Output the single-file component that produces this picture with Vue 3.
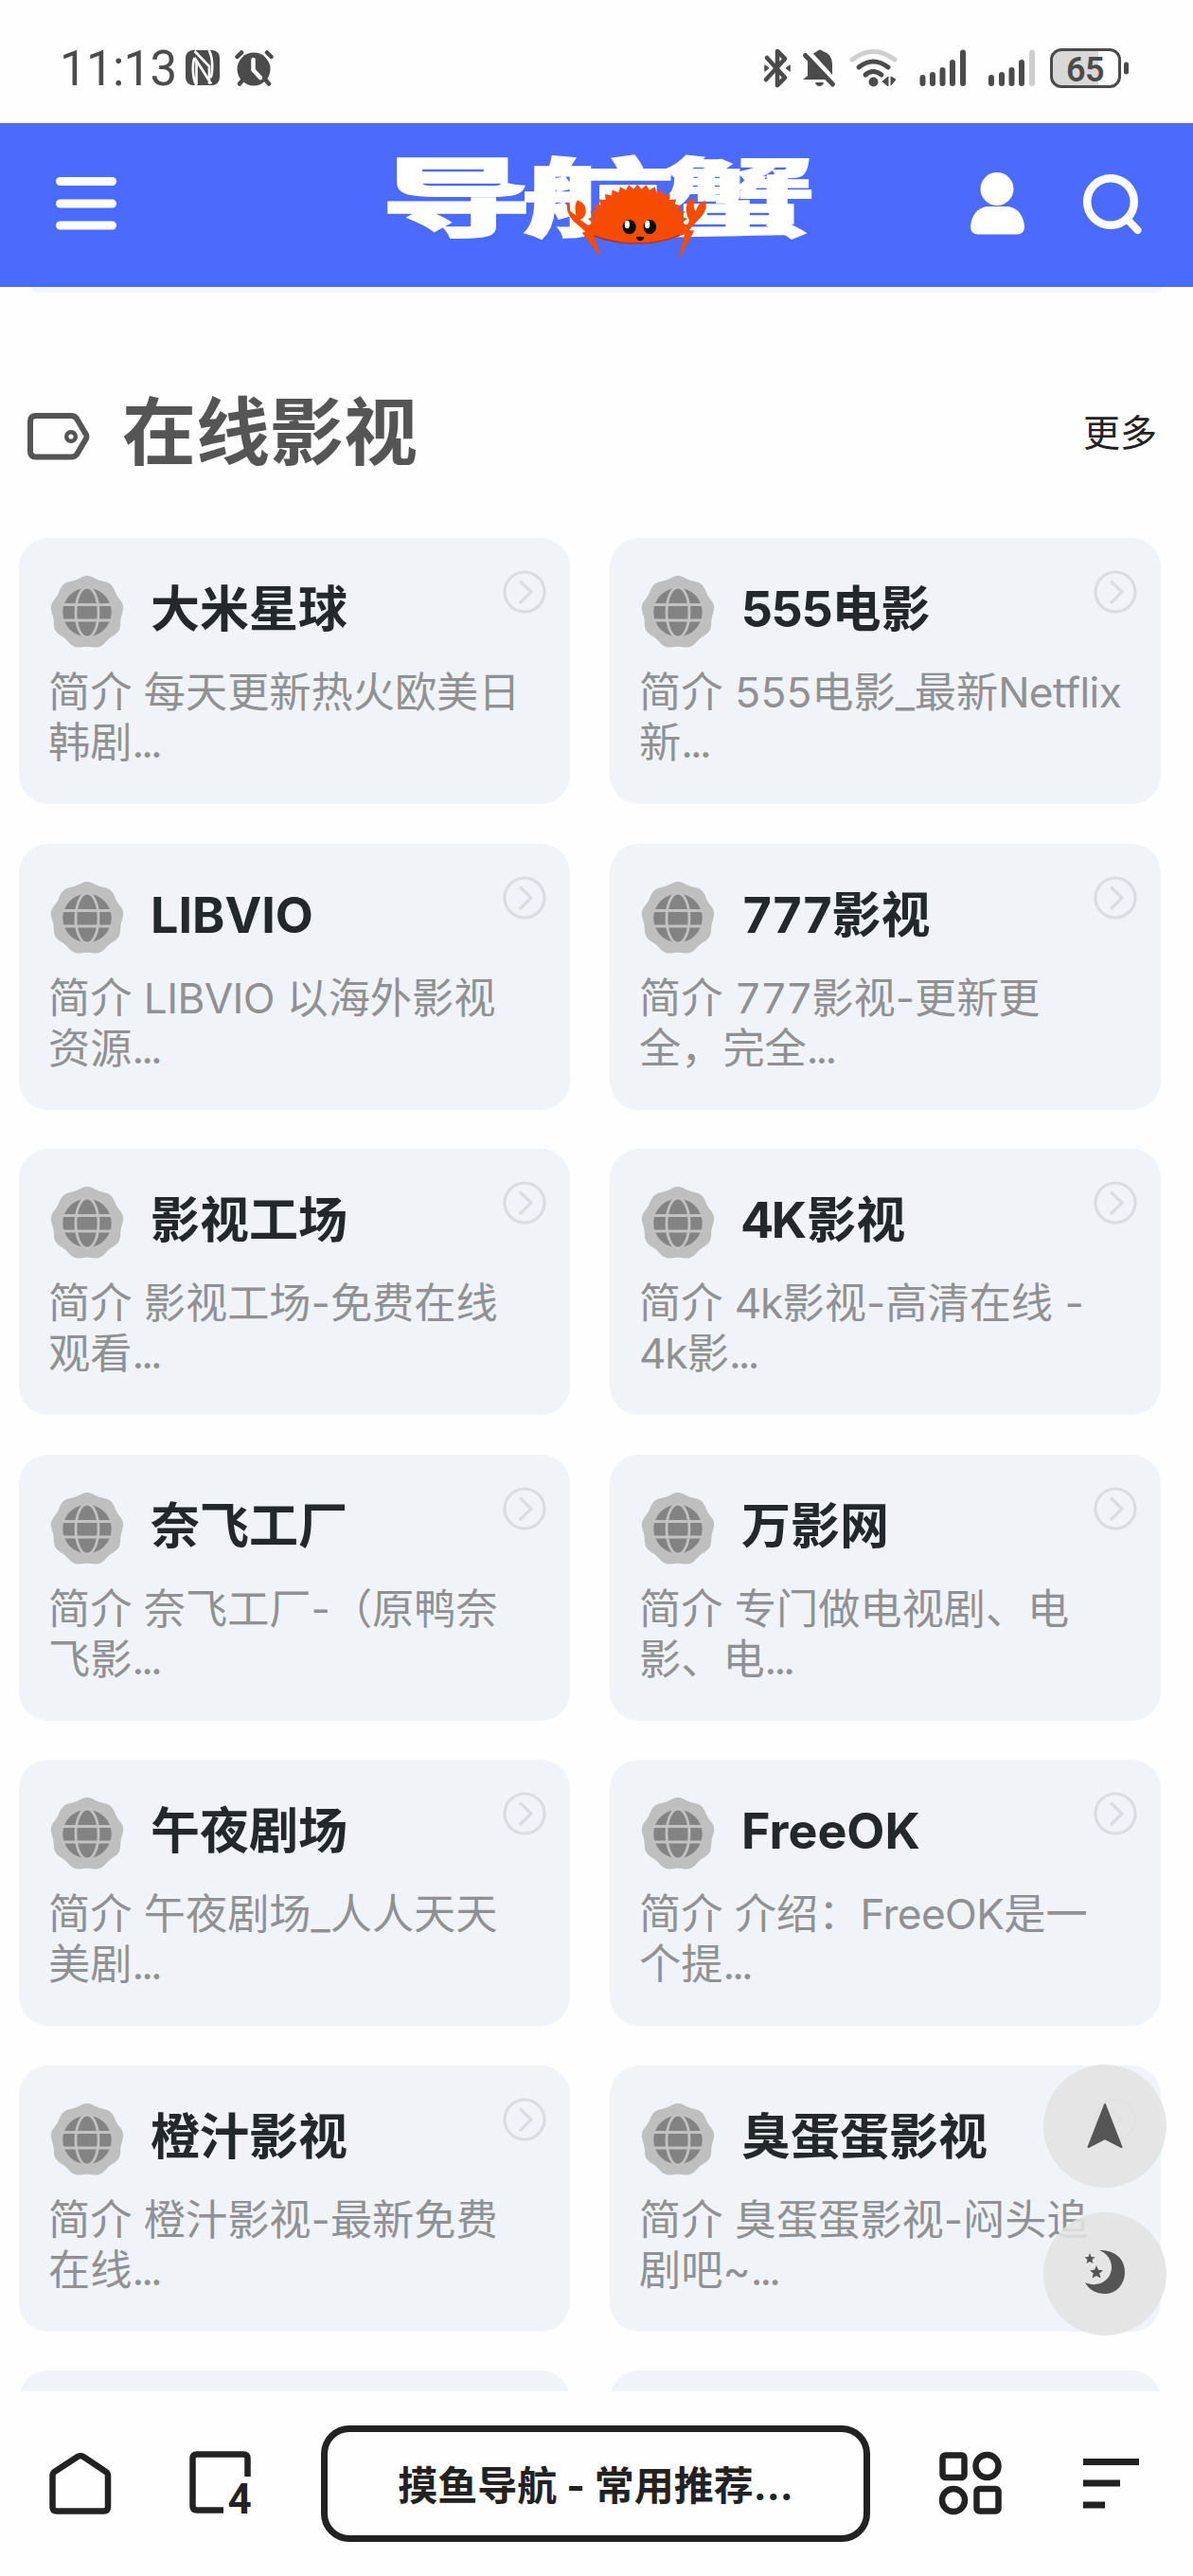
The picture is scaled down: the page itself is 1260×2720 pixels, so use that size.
<script setup>
const rows = [
  ['大米星球', '简介 每天更新热火欧美日', '韩剧...'],
  ['555电影', '简介 555电影_最新Netflix', '新...'],
  ['LIBVIO', '简介 LIBVIO 以海外影视', '资源...'],
  ['777影视', '简介 777影视-更新更', '全，完全...'],
  ['影视工场', '简介 影视工场-免费在线', '观看...'],
  ['4K影视', '简介 4k影视-高清在线 -', '4k影...'],
  ['奈飞工厂', '简介 奈飞工厂-（原鸭奈', '飞影...'],
  ['万影网', '简介 专门做电视剧、电', '影、电...'],
  ['午夜剧场', '简介 午夜剧场_人人天天', '美剧...'],
  ['FreeOK', '简介 介绍：FreeOK是一', '个提...'],
  ['橙汁影视', '简介 橙汁影视-最新免费', '在线...'],
  ['臭蛋蛋影视', '简介 臭蛋蛋影视-闷头追', '剧吧~...'],
]

// Letters, digits and dots each get their own tracking beside the Chinese text
const kind = (t) => (/^[A-Za-z]/.test(t) ? 'alpha' : /^\d/.test(t) ? 'digit' : /^\./.test(t) ? 'dots' : '')
const runs = (text) =>
  text.split(/([A-Za-z]+|\d+|\.+)/).filter(Boolean).map((t) => ({ t, kind: kind(t) }))

const sites = rows.map(([name, ...desc]) => ({ name, title: runs(name), desc: desc.map(runs) }))

// Nine-lobed badge behind the globe, one lobe pointing up
const badge = (() => {
  const pts = []
  for (let i = 0; i < 180; i++) {
    const t = (i / 180) * Math.PI * 2
    const r = 37.4 + 1.2 * Math.cos(9 * t)
    pts.push(`${(39 + r * Math.sin(t)).toFixed(2)},${(38.6 - r * Math.cos(t)).toFixed(2)}`)
  }
  return 'M' + pts.join('L') + 'Z'
})()

// Crab shell: spiky upper half, smooth belly
const shell = (() => {
  const pts = []
  const n = 19
  for (let i = 0; i <= n * 2; i++) {
    const a = Math.PI * (1.03 - (i / (n * 2)) * 1.06)
    const k = i % 2 ? 1 : 0.89
    pts.push(`${(850 + 160 * k * Math.cos(a)).toFixed(1)},${(295 - 131 * k * Math.sin(a)).toFixed(1)}`)
  }
  return 'M' + pts.join('L') + 'L1002,318Q940,352 852,352Q764,352 692,318Z'
})()
</script>

<template>
  <div class="screen">
    <div class="status">
      <div class="status-left">
        <span class="time">11:13</span>
        <svg class="nfc" width="36" height="37" viewBox="0 0 36 37">
          <rect width="36" height="37" rx="8" fill="#4b4b4b" />
          <path d="M11.500 37C7 30 7 14 9.500 8M24.500 0C29 7 29 23 26.500 29" fill="none" stroke="#fff" stroke-width="2.600" />
          <path d="M9.500 1L25 17V35.500M11.500 36V11L27 35.500" fill="none" stroke="#fff" stroke-width="2.600" />
        </svg>
        <svg class="alarm" width="42" height="40" viewBox="0 0 42 40">
          <circle cx="20" cy="21" r="17.500" fill="#4b4b4b" />
          <path d="M2.500 8L7 3.500M38.500 8L34 3.500M8 33L5 36.500M33 33L36 36.500" stroke="#4b4b4b" stroke-width="4.500" stroke-linecap="round" />
          <path d="M19.500 11V22L27 30" fill="none" stroke="#fff" stroke-width="4.500" stroke-linecap="round" stroke-linejoin="round" />
        </svg>
      </div>
      <svg class="status-right" width="390" height="44" viewBox="805 50 390 44">
        <g fill="none" stroke="#4b4b4b" stroke-linecap="round" stroke-linejoin="round">
          <path d="M810 61L829 82L821 90V54L829 62L809 84" stroke-width="4.600" />
          <path d="M808 69L812 72L808 75ZM834 69L830 72L834 75Z" fill="#4b4b4b" stroke-width="1" />
        </g>
        <path d="M848 84L853 80V67Q853 60 858 57Q862 55 863 54Q866 51 869 54Q879 57 879 68V79L882 84Z" fill="#4b4b4b" />
        <path d="M861 87H870Q869 91 865.500 91Q862 91 861 87Z" fill="#4b4b4b" />
        <path d="M854 55L884 88" stroke="#fff" stroke-width="5" />
        <path d="M850.500 58.500L879.500 89" stroke="#4b4b4b" stroke-width="5" stroke-linecap="round" />
        <g fill="none" stroke-width="5" stroke-linecap="round">
          <path d="M900 63Q922 46 945 63" stroke="#cfcfcf" />
          <path d="M907 71Q922 59 938 71M914 79Q922 72 931 79" stroke="#4b4b4b" />
        </g>
        <circle cx="922.500" cy="86.500" r="5" fill="#4b4b4b" />
        <path d="M932 86L938 81V91ZM946 84L941 90V81Z" fill="#4b4b4b" stroke="#4b4b4b" />
        <g stroke="#4b4b4b" stroke-width="6" stroke-linecap="round">
          <path d="M974.500 82V88M985 79V88M995.500 74V88M1006 66V88M1017 55.500V88" />
          <path d="M1047 82V88M1058 79V88M1068.500 74V88M1079 66V88" />
          <path d="M1090 55.500V88" stroke="#cfcfcf" />
        </g>
        <path d="M1120 54H1160V91H1120Q1111 91 1111 82V63Q1111 54 1120 54Z" fill="#d8d8d8" />
        <rect x="1110.500" y="52.500" width="72" height="39" rx="10.500" fill="none" stroke="#4b4b4b" stroke-width="3" />
        <rect x="1187" y="65.500" width="5" height="13" rx="2.500" fill="#4b4b4b" />
        <text class="battery-text" x="1146" y="86" text-anchor="middle">65</text>
      </svg>
    </div>

    <header class="header">
      <svg class="burger" width="64" height="56" viewBox="0 0 64 56" fill="#fff">
        <rect width="64" height="9" rx="4.500" /><rect y="23.500" width="64" height="9" rx="4.500" /><rect y="46.500" width="64" height="9" rx="4.500" />
      </svg>
      <svg class="logo" width="480" height="150" viewBox="0 0 1440 450">
        <text class="logo-text" transform="translate(36 307) scale(1.800 1)" x="0 249 496" y="0">导航蟹</text>
        <g fill="#f74c00">
          <path d="M700 330Q672 300 648 282Q618 250 629 220Q638 226 636 248L655 262Q648 228 660 214Q690 226 686 254Q682 270 668 276L712 306Z" />
          <path d="M990 318Q1008 296 1014 278Q998 250 1008 222Q1020 206 1034 210Q1022 234 1034 250Q1042 222 1064 216Q1074 236 1056 262Q1040 280 1030 290L1004 318Z" />
          <path d="M678 318L731 388L710 330ZM1026 312L984 392L1002 322Z" stroke="#f74c00" stroke-width="5" stroke-linejoin="round" />
          <path :d="shell" />
          <path d="M676 318L712 300V330ZM1028 314L985 295V326Z" />
        </g>
        <path d="M712 327Q850 377 985 325" fill="none" stroke="#a8322b" stroke-width="4" />
        <ellipse cx="824" cy="299" rx="21" ry="23" /><ellipse cx="889" cy="299" rx="20" ry="23" />
        <ellipse cx="817" cy="291" rx="8" ry="13" fill="#fff" /><ellipse cx="881" cy="291" rx="8" ry="13" fill="#fff" />
        <path d="M845 331Q858 328 872 331Q868 343 858 343Q849 343 845 331Z" />
      </svg>
      <div class="actions">
        <svg width="58" height="66" viewBox="0 0 58 66" fill="#fff">
          <circle cx="28" cy="17.500" r="17.500" />
          <path d="M17 36H40Q55 39 57 57Q57 65.500 49 65.500H8Q0 65.500 0 57Q2 39 17 36Z" />
        </svg>
        <svg width="64" height="66" viewBox="0 0 64 66" fill="none" stroke="#fff">
          <circle cx="29" cy="31" r="24.800" stroke-width="8.500" /><path d="M47 50L57.500 61" stroke-width="8" stroke-linecap="round" />
        </svg>
      </div>
    </header>
    <div class="header-lip"></div>

    <main class="content">
      <div class="section-head">
        <svg class="tag" width="66" height="50" viewBox="0 0 66 50" fill="none" stroke="#555" stroke-width="6">
          <path d="M9 3H46Q50 3 52 6L62 23Q63 25 62 27L52 44Q50 46.500 46 46.500H9Q3 46.500 3 40.500V9Q3 3 9 3Z" />
          <circle cx="46" cy="25" r="4.800" stroke-width="4.500" />
        </svg>
        <h1>在线影视</h1>
        <a class="more">更多</a>
      </div>

      <div class="grid">
        <article v-for="s in sites" :key="s.name" class="card">
          <div class="card-head">
            <svg class="globe" width="78" height="76" viewBox="0 0 78 76">
              <path :d="badge" fill="#bfbfbf" />
              <circle cx="39" cy="38.500" r="25.700" fill="#838383" />
              <g fill="none" stroke="#c2c2c2" stroke-width="2.800">
                <ellipse cx="39" cy="38.500" rx="12" ry="26.500" /><path d="M13 30.500H65M13 47H65" />
              </g>
            </svg>
            <h2><span v-for="(r, i) in s.title" :key="i" :class="r.kind">{{ r.t }}</span></h2>
            <svg class="go" width="46" height="46" viewBox="0 0 46 46" fill="none" stroke="#dadde0" stroke-width="3.200">
              <circle cx="23" cy="23" r="21" /><path d="M18 11.500L30 23L18 35" />
            </svg>
          </div>
          <p v-for="(line, n) in s.desc" :key="n"><span v-for="(r, i) in line" :key="i" :class="r.kind">{{ r.t }}</span></p>
        </article>
        <article class="card"></article>
        <article class="card"></article>
      </div>

      <div class="floaters">
        <div class="fab">
          <svg width="38" height="48" viewBox="0 0 38 48"><path d="M19 1L36.500 46L19 37L1.500 46Z" fill="#555" stroke="#555" stroke-width="2" stroke-linejoin="round" /></svg>
        </div>
        <div class="fab">
          <svg width="42" height="50" viewBox="0 2 42 50" fill="#555">
            <path d="M15 0C33 0 42 10 42 23C42 36 33 46 21 46C12 46 4 42 0 34C12 40 28 33 28 18C28 10 23 3 15 0Z" transform="translate(0 2)" />
            <path d="M5 5L6.500 9L10.500 9.400L7.500 12L8.500 16L5 14L1.500 16L2.500 12L-.5 9.400L3.500 9ZM12 18L14 22.800L19 23.200L15.200 26.500L16.500 31.500L12 29L7.500 31.500L8.800 26.500L5 23.200L10 22.800Z" />
          </svg>
        </div>
      </div>
    </main>

    <nav class="bottom">
      <svg class="home" width="66" height="66" viewBox="0 0 66 66" fill="none" stroke="#222" stroke-width="6.500" stroke-linejoin="round">
        <path d="M3.500 24Q3.500 21.500 5.500 20L30 4Q33 2 36 4L60 20Q62 21.500 62 24V57Q62 61.500 57.500 61.500H8Q3.500 61.500 3.500 57Z" />
      </svg>
      <svg class="tabs" width="66" height="68" viewBox="0 0 66 68" fill="none" stroke="#222" stroke-width="6.500">
        <path d="M36 62.500H8Q3.500 62.500 3.500 58V8Q3.500 3.500 8 3.500H57Q61.500 3.500 61.500 8V27" />
        <text class="tab-count" x="53" y="66" text-anchor="middle">4</text>
      </svg>
      <div class="address">摸鱼导航 - 常用推荐...</div>
      <svg class="apps" width="66" height="66" viewBox="0 0 66 66" fill="none" stroke="#222" stroke-width="6.500">
        <rect x="3.500" y="3.500" width="23" height="23.500" rx="3" /><circle cx="50.500" cy="15" r="12" />
        <circle cx="15" cy="51" r="12" /><rect x="39.500" y="39" width="23" height="23.500" rx="3" />
      </svg>
      <svg class="menu" width="59" height="53" viewBox="0 0 59 53" fill="#222">
        <rect width="59" height="7" /><rect y="22.500" width="39" height="7" /><rect y="45.500" width="23" height="7" />
      </svg>
    </nav>
  </div>
</template>

<style>
body { margin: 0; background: #fff; }
</style>

<style scoped>
.screen {
  width: 1260px;
  height: 2720px;
  display: flex;
  flex-direction: column;
  overflow: hidden;
  background: #fefefe;
  font-family: Inter, "Noto Sans CJK SC", sans-serif;
}
svg { display: block; flex: none; overflow: visible; }

.status { height: 130px; flex: none; display: flex; justify-content: space-between; padding: 0 65px 0 63px; box-sizing: border-box; }
.status-left { display: flex; align-items: flex-start; }
.time { width: 133px; margin-top: 43px; font: 400 51px/60px Roboto, sans-serif; letter-spacing: -.7px; color: #4b4b4b; white-space: nowrap; }
.nfc { margin-top: 53px; }
.alarm { margin: 52px 0 0 16px; }
.status-right { margin-top: 50px; }
.battery-text { font: 600 36px Roboto, sans-serif; fill: #4b4b4b; letter-spacing: -.5px; }

.header { height: 173px; flex: none; display: flex; align-items: flex-start; background: #4b6bfe; }
.burger { margin: 57px 0 0 59px; }
.logo { margin: 10px 0 0 267px; }
.logo-text { font: 900 268px "Noto Sans CJK SC", sans-serif; fill: #fff; stroke: #fff; stroke-width: 4px; }
.actions { display: flex; gap: 61px; margin: 52px 0 0 155px; }
.header-lip { height: 6px; flex: none; margin: 0 33px; border-radius: 0 0 20px 20px; background: #f3f6ff; }

.content { position: relative; height: 2216px; flex: none; overflow: hidden; }
.section-head { display: flex; align-items: center; height: 144px; padding: 74px 38px 41px 29px; }
.tag { margin-top: 11px; }
h1 { margin: 3px auto 0 34px; font-size: 78px; line-height: 90px; font-weight: 700; color: #555; }
.more { margin-top: 3px; font-size: 39px; line-height: 50px; color: #222; }

.grid { display: grid; grid-template-columns: 581.500px 581.500px; grid-auto-rows: 281px; gap: 41.500px 42.500px; padding: 0 0 0 20px; }
.card { border-radius: 31px; background: #f0f4f9; padding: 40px 25px 0 32px; box-sizing: border-box; }
.card-head { display: flex; height: 76px; align-items: flex-start; margin-bottom: 21px; }
.globe { margin-left: 1px; }
h2 { margin: 3px auto 0 28px; font-size: 52px; line-height: 66px; font-weight: 700; color: #23282c; white-space: nowrap; }
.go { margin-top: -6px; }
p { margin: 0 0 0 -1px; font-size: 44.200px; line-height: 53px; color: #8f9194; white-space: pre; }
.alpha { letter-spacing: -.014em; }
h2 .alpha { letter-spacing: 0; }
.digit { letter-spacing: -.034em; font-kerning: none; font-variant-numeric: tabular-nums; }
.dots { letter-spacing: -.065em; }

.floaters { position: absolute; left: 1102px; top: 1871px; display: flex; flex-direction: column; gap: 26px; }
.fab { width: 130px; height: 130px; border-radius: 50%; display: flex; align-items: center; justify-content: center; background: rgba(226, 226, 226, .88); }

.bottom { flex: 1; display: flex; align-items: flex-start; }
.home { margin: 65px 0 0 52px; }
.tabs { margin: 63px 0 0 82px; }
.tab-count { font: 700 44px Roboto, sans-serif; fill: #222; stroke: none; }
.address { width: 580px; height: 123px; box-sizing: border-box; margin: 36px 0 0 73px; border: 7px solid #222; border-radius: 30px; padding-top: 4px; text-align: center; font-size: 42px; line-height: 105px; font-weight: 700; color: #222; white-space: nowrap; }
.apps { margin: 64px 0 0 73px; }
.menu { margin: 71px 0 0 86px; }
</style>
